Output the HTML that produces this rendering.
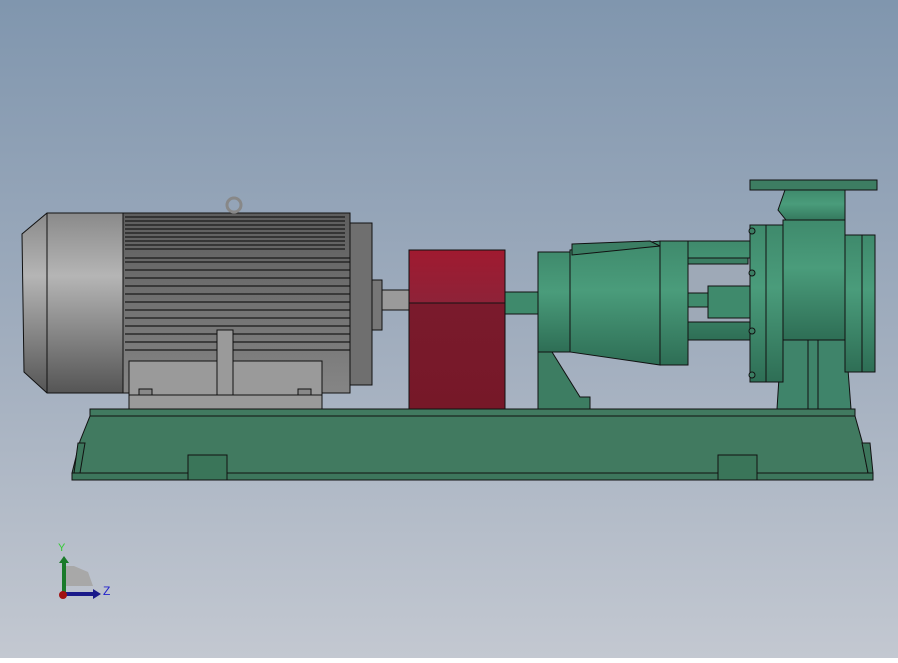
<!DOCTYPE html>
<html><head><style>html,body{margin:0;padding:0}body{width:898px;height:658px;overflow:hidden}</style></head>
<body>
<svg width="898" height="658" viewBox="0 0 898 658" xmlns="http://www.w3.org/2000/svg" stroke="#111" stroke-width="1">
<defs>
<linearGradient id="bg" x1="0" y1="0" x2="0" y2="1"><stop offset="0" stop-color="#8096ae"/><stop offset="0.55" stop-color="#a3afbf"/><stop offset="1" stop-color="#c3c8d1"/></linearGradient>
<linearGradient id="cap" x1="0" y1="0" x2="0" y2="1"><stop offset="0" stop-color="#8a8a8a"/><stop offset="0.35" stop-color="#b5b5b5"/><stop offset="1" stop-color="#555"/></linearGradient>
<linearGradient id="body" x1="0" y1="0" x2="0" y2="1"><stop offset="0" stop-color="#5e5e5e"/><stop offset="1" stop-color="#858585"/></linearGradient>
<linearGradient id="red" x1="0" y1="0" x2="0" y2="1"><stop offset="0" stop-color="#a01a30"/><stop offset="0.33" stop-color="#8e2238"/><stop offset="0.34" stop-color="#7a1a2c"/><stop offset="1" stop-color="#761828"/></linearGradient>
<linearGradient id="grn" x1="0" y1="0" x2="0" y2="1"><stop offset="0" stop-color="#3f8a6c"/><stop offset="0.4" stop-color="#4a9c7b"/><stop offset="1" stop-color="#2e6e55"/></linearGradient>
</defs>
<rect x="0" y="0" width="898" height="658" fill="url(#bg)" stroke="none"/>
<!-- base -->
<polygon points="72,473 80,441 90,416 90,409 855,409 855,416 862,441 868,473" fill="#417a60"/>
<line x1="90" y1="416" x2="855" y2="416"/>
<polygon points="74,473 78,443 85,443 80,473" fill="#3d765c"/>
<polygon points="862,443 870,443 873,473 868,473" fill="#3d765c"/>
<rect x="72" y="473" width="801" height="7" fill="#3d765c"/>
<rect x="188" y="455" width="39" height="25" fill="#3a7559"/>
<rect x="718" y="455" width="39" height="25" fill="#3a7559"/>
<!-- motor -->
<polygon points="47,213 123,213 123,393 47,393 24,372 22,234" fill="url(#cap)"/>
<line x1="47" y1="213" x2="47" y2="393"/>
<rect x="123" y="213" width="227" height="180" fill="url(#body)"/>
<g stroke="#1a1a1a" stroke-width="1.3">
<line x1="125" y1="217" x2="345" y2="217"/><line x1="125" y1="221" x2="345" y2="221"/><line x1="125" y1="225" x2="345" y2="225"/><line x1="125" y1="229" x2="345" y2="229"/><line x1="125" y1="233" x2="345" y2="233"/><line x1="125" y1="237" x2="345" y2="237"/><line x1="125" y1="241" x2="345" y2="241"/><line x1="125" y1="245" x2="345" y2="245"/><line x1="125" y1="249" x2="345" y2="249"/>
<line x1="125" y1="258" x2="350" y2="258"/><line x1="125" y1="262" x2="350" y2="262"/><line x1="125" y1="270" x2="350" y2="270"/><line x1="125" y1="278" x2="350" y2="278"/><line x1="125" y1="286" x2="350" y2="286"/><line x1="125" y1="294" x2="350" y2="294"/><line x1="125" y1="302" x2="350" y2="302"/><line x1="125" y1="310" x2="350" y2="310"/><line x1="125" y1="318" x2="350" y2="318"/><line x1="125" y1="326" x2="350" y2="326"/><line x1="125" y1="334" x2="350" y2="334"/><line x1="125" y1="342" x2="350" y2="342"/><line x1="125" y1="350" x2="350" y2="350"/>
</g>
<rect x="350" y="223" width="22" height="162" fill="#6f6f6f"/>
<rect x="372" y="280" width="10" height="50" fill="#777"/>
<rect x="382" y="290" width="28" height="20" fill="#9a9a9a"/>
<circle cx="234" cy="205" r="7" fill="none" stroke="#888" stroke-width="3"/>
<rect x="129" y="361" width="193" height="48" fill="#9a9a9a"/>
<line x1="129" y1="395" x2="322" y2="395"/>
<rect x="217" y="330" width="16" height="65" fill="#9a9a9a"/>
<rect x="139" y="389" width="13" height="6" fill="#888"/><rect x="298" y="389" width="13" height="6" fill="#888"/>
<!-- coupling guard -->
<rect x="409" y="250" width="96" height="159" fill="url(#red)"/>
<line x1="409" y1="303" x2="505" y2="303"/>
<rect x="505" y="292" width="35" height="22" fill="#3f8a6c"/>
<!-- bearing pedestal foot -->
<polygon points="538,352 552,352 580,397 590,397 590,409 538,409" fill="#3d7d62"/>
<!-- bearing housing -->
<rect x="538" y="252" width="32" height="100" fill="url(#grn)"/>
<polygon points="570,250 660,241 660,365 570,352" fill="url(#grn)"/>
<polygon points="572,244 650,241 660,246 572,255" fill="#3b7e63"/>
<rect x="660" y="241" width="28" height="124" fill="url(#grn)"/>
<rect x="688" y="241" width="62" height="99" fill="url(#grn)"/>
<rect x="688" y="258" width="62" height="64" fill="#9ea9b7"/>
<rect x="688" y="258" width="60" height="6" fill="#3b7e63"/>
<rect x="688" y="293" width="20" height="14" fill="#3f8a6c"/>
<rect x="708" y="286" width="42" height="32" fill="#3f8a6c"/>
<!-- casing -->
<polygon points="777,409 782,330 845,330 851,409" fill="#3f846a"/>
<rect x="808" y="332" width="10" height="77" fill="#3f846a"/>
<rect x="750" y="225" width="33" height="157" fill="url(#grn)"/>
<line x1="766" y1="225" x2="766" y2="382"/>
<polygon points="785,190 845,190 845,225 835,225 790,225 778,210" fill="url(#grn)"/>
<rect x="750" y="180" width="127" height="10" fill="#3d7d62"/>
<rect x="783" y="220" width="62" height="120" fill="url(#grn)"/>
<rect x="845" y="235" width="30" height="137" fill="url(#grn)"/>
<line x1="862" y1="235" x2="862" y2="372"/>
<g fill="#3b7e63"><circle cx="752" cy="231" r="3"/><circle cx="752" cy="273" r="3"/><circle cx="752" cy="331" r="3"/><circle cx="752" cy="375" r="3"/></g>
<!-- triad -->
<polygon points="64,566 74,566 88,572 93,586 64,586" fill="#a8a8a8" stroke="none"/>
<rect x="62" y="562" width="4" height="32" fill="#1a7a2a" stroke="none"/>
<polygon points="59,563 64,556 69,563" fill="#1a7a2a" stroke="none"/>
<rect x="62" y="592" width="32" height="4" fill="#1a1a8a" stroke="none"/>
<polygon points="93,589 101,594 93,599" fill="#1a1a8a" stroke="none"/>
<circle cx="63" cy="595" r="4" fill="#a01010" stroke="none"/>
<text x="58" y="551" font-family="Liberation Sans" font-size="11" fill="#33cc33" stroke="none">Y</text>
<text x="103" y="595" font-family="Liberation Sans" font-size="12" fill="#2222cc" stroke="none">Z</text>
</svg>
</body></html>
